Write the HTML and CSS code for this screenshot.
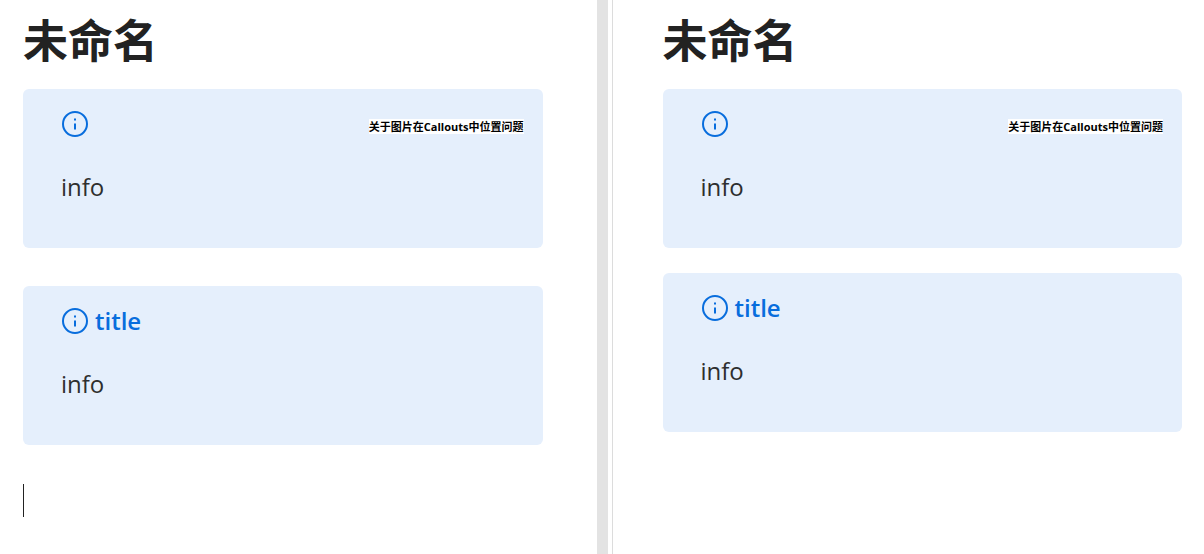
FILE: index.html
```html
<!DOCTYPE html>
<html lang="zh-CN">
<head>
  <meta charset="UTF-8">
  <title>未命名</title>
  <link rel="stylesheet" href="styles.css">
</head>
<body>

  <main class="workspace">
    <section class="pane editor">
      <h1>未命名</h1>

      <div class="callout">
        <div class="callout-title">
          <svg class="icon" viewBox="0 0 28 28" aria-hidden="true">
            <circle cx="14" cy="14" r="12"/>
            <path d="M14 13.5v6M14 8.5v2"/>
          </svg>
          <span class="caption">关于图片在Callouts中位置问题</span>
        </div>
        <p>info</p>
      </div>

      <div class="callout">
        <div class="callout-title">
          <svg class="icon" viewBox="0 0 28 28" aria-hidden="true">
            <circle cx="14" cy="14" r="12"/>
            <path d="M14 13.5v6M14 8.5v2"/>
          </svg>
          <span>title</span>
        </div>
        <p>info</p>
      </div>

      <div class="cursor"></div>
    </section>

    <div class="divider"></div>

    <section class="pane preview">
      <h1>未命名</h1>

      <div class="callout">
        <div class="callout-title">
          <svg class="icon" viewBox="0 0 28 28" aria-hidden="true">
            <circle cx="14" cy="14" r="12"/>
            <path d="M14 13.5v6M14 8.5v2"/>
          </svg>
          <span class="caption">关于图片在Callouts中位置问题</span>
        </div>
        <p>info</p>
      </div>

      <div class="callout">
        <div class="callout-title">
          <svg class="icon" viewBox="0 0 28 28" aria-hidden="true">
            <circle cx="14" cy="14" r="12"/>
            <path d="M14 13.5v6M14 8.5v2"/>
          </svg>
          <span>title</span>
        </div>
        <p>info</p>
      </div>
    </section>
  </main>

</body>
</html>
```

FILE: styles.css
```css
* {
  box-sizing: border-box;
}

body {
  margin: 0;
  font-family: "Open Sans", "Noto Sans CJK SC", sans-serif;
  font-size: 24px;
  line-height: 38px;
  color: #2e2e2e;
  background: #fff;
}

.workspace {
  display: flex;
  min-height: 100vh;
}

.pane {
  flex: 1;
  padding-top: 9px;
}

.editor {
  padding-left: 23px;
  padding-right: 54px;
}

.preview {
  margin-left: 4px;
  padding-left: 50px;
  padding-right: 22px;
  border-left: 1px solid #dcdcdc;
}

.divider {
  width: 11px;
  background: #e3e3e3;
}

h1 {
  margin: 0 0 20px;
  font-family: "Noto Sans CJK SC", sans-serif;
  font-size: 45px;
  line-height: 60px;
  color: #222;
}

.callout {
  padding: 16px 19px 42px 38px;
  margin-bottom: 39px;
  border-radius: 6px;
  background: #e5effc;
}

.callout + .callout {
  margin-top: -1px;
}

.preview .callout {
  margin-bottom: 26px;
}

.callout-title {
  display: flex;
  align-items: center;
  gap: 6px;
  min-height: 38px;
  margin-bottom: 25px;
  font-weight: 600;
  color: #086ddd;
}

.icon {
  width: 28px;
  height: 28px;
  fill: none;
  stroke: #086ddd;
  stroke-width: 2;
}

.caption {
  margin-top: 5px;
  margin-left: auto;
  font-size: 11px;
  font-weight: bold;
  line-height: 15px;
  color: #000;
  background: #fff;
}

.callout p {
  margin: 0;
}

.cursor {
  width: 1px;
  height: 33px;
  background: #222;
}
```
